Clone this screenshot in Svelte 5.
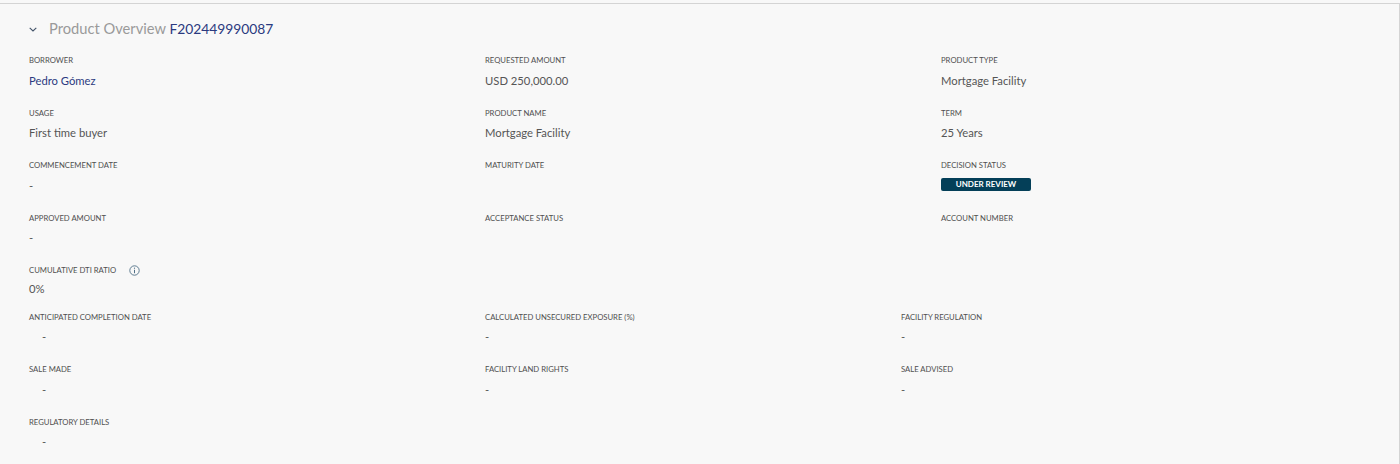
<script>
	const topRows = [
		{ label: 'Borrower', value: 'Pedro Gómez', link: true },
		{ label: 'Requested Amount', value: 'USD 250,000.00' },
		{ label: 'Product Type', value: 'Mortgage Facility' },
		{ label: 'Usage', value: 'First time buyer' },
		{ label: 'Product Name', value: 'Mortgage Facility' },
		{ label: 'Term', value: '25 Years' },
		{ label: 'Commencement Date', value: '-' },
		{ label: 'Maturity Date', value: '' },
		{ label: 'Decision Status', badge: 'Under Review' },
		{ label: 'Approved Amount', value: '-' },
		{ label: 'Acceptance Status', value: '' },
		{ label: 'Account Number', value: '' }
	];

	const bottomRows = [
		{ label: 'Anticipated Completion Date', value: '-', indent: true },
		{ label: 'Calculated Unsecured Exposure (%)', value: '-' },
		{ label: 'Facility Regulation', value: '-' },
		{ label: 'Sale Made', value: '-', indent: true },
		{ label: 'Facility Land Rights', value: '-' },
		{ label: 'Sale Advised', value: '-' },
		{ label: 'Regulatory Details', value: '-', indent: true }
	];
</script>

<section class="panel">
	<header class="head">
		<svg class="chevron" width="8" height="5" viewBox="0 0 8 5" aria-hidden="true">
			<path d="M0.7 0.8 L4 4 L7.3 0.8" fill="none" stroke="#44546a" stroke-width="1.1" />
		</svg>
		<h2><span class="muted">Product Overview</span> <span class="ref">F202449990087</span></h2>
	</header>

	<div class="grid top">
		{#each topRows as item}
			<div class="field">
				<div class="label">{item.label}</div>
				{#if item.badge}
					<span class="badge">{item.badge}</span>
				{:else}
					<div class="value" class:link={item.link}>{item.value}</div>
				{/if}
			</div>
		{/each}
	</div>

	<div class="field dti">
		<div class="label">
			Cumulative DTI Ratio
			<svg class="info" width="11" height="11" viewBox="0 0 11 11" aria-hidden="true">
				<circle cx="5.5" cy="5.5" r="4.7" fill="none" stroke="#4f6f86" stroke-width="0.9" />
				<path d="M5.5 4.8 V8.2" stroke="#4f6f86" stroke-width="1" />
				<circle cx="5.5" cy="3.2" r="0.6" fill="#4f6f86" />
			</svg>
		</div>
		<div class="value">0%</div>
	</div>

	<div class="grid bottom">
		{#each bottomRows as item}
			<div class="field">
				<div class="label">{item.label}</div>
				<div class="value" class:indent={item.indent}>{item.value}</div>
			</div>
		{/each}
	</div>
</section>

<style>
	:global(body) {
		margin: 0;
		background: #f8f8f8;
	}

	.panel {
		box-sizing: border-box;
		height: 464px;
		margin-top: 3px;
		padding: 0 0 0 29px;
		background: #f8f8f8;
		border-top: 1px solid #d4d4d4;
		border-right: 1px solid #d4d4d4;
		font-family: Lato, "Noto Sans", sans-serif;
		color: #4a4a4a;
		overflow: hidden;
	}

	.head {
		display: flex;
		align-items: center;
		gap: 13px;
		height: 50px;
	}

	.chevron {
		flex: none;
	}

	h2 {
		margin: 0 0 2px -1px;
		font-size: 14.7px;
		font-weight: 400;
		line-height: 48px;
		white-space: nowrap;
	}

	.muted {
		color: #9a9a9a;
	}

	.ref {
		color: #2b3a80;
		font-size: 13.8px;
	}

	.grid {
		display: grid;
	}

	.top {
		grid-template-columns: 456px 456px 1fr;
		grid-auto-rows: 52.5px;
	}

	.bottom {
		grid-template-columns: 456px 416px 1fr;
		grid-auto-rows: 52.5px;
	}

	.field {
		min-width: 0;
	}

	.dti {
		height: 46.6px;
	}

	.dti .value {
		margin-top: 5px;
	}

	.label {
		display: flex;
		align-items: center;
		gap: 13px;
		height: 12px;
		font-size: 7.7px;
		line-height: 12px;
		text-transform: uppercase;
		color: #4f4f4f;
		white-space: nowrap;
	}

	.value {
		margin-top: 6.9px;
		font-size: 11.25px;
		line-height: 16px;
		color: #555;
	}

	.link {
		color: #2b3a80;
	}

	.indent {
		padding-left: 13px;
	}

	.badge {
		display: block;
		width: 90px;
		height: 13px;
		margin-top: 7px;
		border-radius: 2px;
		background: #043f58;
		color: #fff;
		font-size: 8px;
		font-weight: 700;
		line-height: 13px;
		text-align: center;
		text-transform: uppercase;
	}
</style>
